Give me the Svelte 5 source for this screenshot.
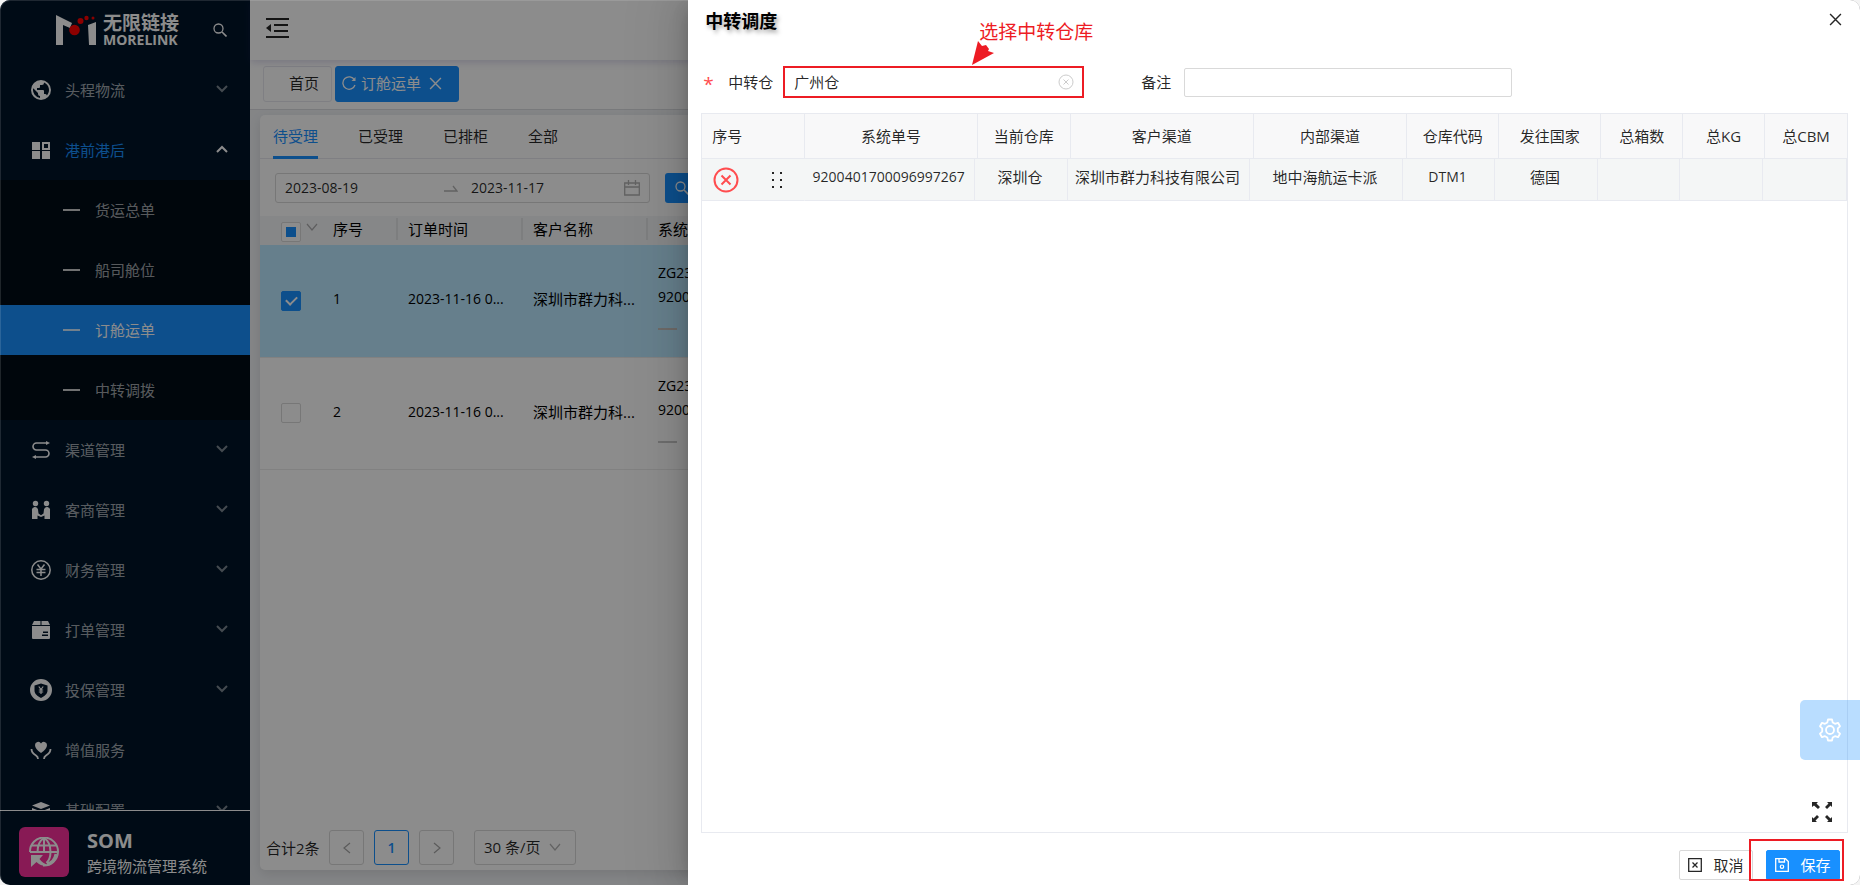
<script>
  let warehouse = $state("广州仓");
  let remark = $state("");
  let startDate = $state("2023-08-19");
  let endDate = $state("2023-11-17");
  let allChecked = $state(false);

  const menu = [
    { icon: "globe", label: "头程物流", arrow: true },
    {
      icon: "grid",
      label: "港前港后",
      arrow: true,
      open: true,
      children: ["货运总单", "船司舱位", "订舱运单", "中转调拨"],
    },
    { icon: "route", label: "渠道管理", arrow: true },
    { icon: "people", label: "客商管理", arrow: true },
    { icon: "yen", label: "财务管理", arrow: true },
    { icon: "box", label: "打单管理", arrow: true },
    { icon: "shield", label: "投保管理", arrow: true },
    { icon: "heart", label: "增值服务", arrow: false },
    { icon: "layers", label: "基础配置", arrow: true },
  ];
  const activeChild = "订舱运单";

  const statusTabs = ["待受理", "已受理", "已排柜", "全部"];

  let orders = $state([
    { id: 1, time: "2023-11-16 0...", customer: "深圳市群力科...", no: "ZG23111600001", sys: "9200401700096997267", checked: true },
    { id: 2, time: "2023-11-16 0...", customer: "深圳市群力科...", no: "ZG23111600002", sys: "9200401700096997268", checked: false },
  ]);

  const headCols = [
    { title: "序号", width: 103 },
    { title: "系统单号", width: 173 },
    { title: "当前仓库", width: 93 },
    { title: "客户渠道", width: 183 },
    { title: "内部渠道", width: 154 },
    { title: "仓库代码", width: 92 },
    { title: "发往国家", width: 102 },
    { title: "总箱数", width: 82 },
    { title: "总KG", width: 82 },
    { title: "总CBM", width: 82 },
  ];
  const bodyWidths = [103, 170, 93, 182, 153, 92, 103, 82, 83, 84];
  const transfers = [
    ["9200401700096997267", "深圳仓", "深圳市群力科技有限公司", "地中海航运卡派", "DTM1", "德国", "", "", ""],
  ];
  const isLatin = (s) => /^[\x20-\x7e]+$/.test(s);
  const share = (w, all) => (w / all.reduce((a, b) => a + b, 0)) * 100;
  const headWidths = headCols.map((c) => c.width);
</script>

{#snippet menuIcon(name)}
  <svg class="menu-icon" viewBox="0 0 22 22" width="22" height="22" aria-hidden="true">
    {#if name === "globe"}
      <path fill="currentColor" fill-rule="evenodd" d="M11 1a10 10 0 1 0 0 20 10 10 0 0 0 0-20zM10 18.900A8 8 0 0 1 3.200 9.200L8 14v1a2 2 0 0 0 2 2v1.900zm6.900-2.500A2 2 0 0 0 15 15h-1v-3a1 1 0 0 0-1-1H7V9h2a1 1 0 0 0 1-1V6h2a2 2 0 0 0 2-2v-.400a8 8 0 0 1 2.900 12.800z" />
    {:else if name === "grid"}
      <path fill="currentColor" d="M2 3h8v8H2zM2 12h8v8H2zM12 12h8v8h-8z" />
      <rect x="13" y="4" width="6" height="6" fill="none" stroke="currentColor" stroke-width="2" />
    {:else if name === "route"}
      <g fill="none" stroke="currentColor" stroke-width="1.600">
        <path d="M17 4H6.500a3.500 3.500 0 0 0 0 7h9a3.500 3.500 0 0 1 0 7H5" />
      </g>
      <path fill="currentColor" d="M16 2l4 2-4 2zM6 16l-4 2 4 2z" />
    {:else if name === "people"}
      <g fill="currentColor">
        <circle cx="5.500" cy="4.500" r="2.700" />
        <circle cx="16.500" cy="4.500" r="2.700" />
        <path d="M2 20v-8.500a3 3 0 0 1 6-1l.500 4 2.500 1.700 2.500-1.700.500-4a3 3 0 0 1 6 1V20h-5.500v-3.500L11 18l-3.500-1.500V20z" />
      </g>
    {:else if name === "yen"}
      <g fill="none" stroke="currentColor" stroke-width="1.500">
        <circle cx="11" cy="11" r="9.200" />
        <path d="M7.500 5.500l3.500 4.500 3.500-4.500M11 10v7M6.500 10.500h9M6.500 13.500h9" />
      </g>
    {:else if name === "box"}
      <path fill="currentColor" fill-rule="evenodd" d="M4 2h6.500v4H2zM11.500 2H18l2 4h-8.500zM2 7h18v12a1 1 0 0 1-1 1H3a1 1 0 0 1-1-1zM13 12.500V14h5v-1.500zM12 15.500V17h6v-1.500z" />
    {:else if name === "shield"}
      <path fill="currentColor" fill-rule="evenodd" d="M11 0a11 11 0 1 0 0 22 11 11 0 0 0 0-22zM11 4.500l6.500 2v5c0 3.500-3 5.500-6.500 7.500-3.500-2-6.500-4-6.500-7.500v-5z" />
      <path fill="none" stroke="currentColor" stroke-width="1.200" d="M8.800 7.500L11 10.500l2.200-3M11 10.500V15M8.800 11h4.400M8.800 13h4.400" />
    {:else if name === "heart"}
      <path fill="currentColor" d="M11 14C7 11 5 9 5 6a3.200 3.200 0 0 1 6-1.500A3.200 3.200 0 0 1 17 6c0 3-2 5-6 8z" />
      <path fill="none" stroke="currentColor" stroke-width="1.800" d="M1.500 10c0 4 2 5 4.500 6.500 1.500 1 2 2 2 3.500M20.500 10c0 4-2 5-4.500 6.500-1.500 1-2 2-2 3.500" />
    {:else}
      <path fill="currentColor" d="M11 3l9 3.500-9 3.500-9-3.500zM2 9l9 3.500L20 9v2l-9 3.500L2 11zM2 14l9 3.500 9-3.500v2l-9 3.500L2 16z" />
    {/if}
  </svg>
{/snippet}

{#snippet cross(size)}
  <svg viewBox="0 0 12 12" width={size} height={size} aria-hidden="true">
    <path d="M1 1l10 10M11 1L1 11" fill="none" stroke="currentColor" stroke-width="1.300" />
  </svg>
{/snippet}

<div class="window">
  <aside class="sidebar">
    <div class="logo">
      <svg viewBox="0 0 40 32" width="40" height="32" aria-hidden="true">
        <path fill="#fff" d="M0 1l16 8-2 5-7-3v20H0zM32 11l8-3v23h-7z" />
        <g fill="#f00">
          <circle cx="18.500" cy="16" r="5.300" />
          <circle cx="24.500" cy="7" r="3" />
          <circle cx="30.500" cy="4" r="2.200" />
          <circle cx="37" cy="4" r="1.500" />
        </g>
      </svg>
      <div class="logo-text">
        <span class="logo-cn">无限链接</span>
        <span class="logo-en">MORELINK</span>
      </div>
      <button class="logo-search" aria-label="搜索">
        <svg viewBox="0 0 14 14" width="14" height="14" aria-hidden="true">
          <path d="M9 9l4.500 4.500" stroke="currentColor" stroke-width="1.600" />
          <circle cx="5.500" cy="5.500" r="4.500" fill="none" stroke="currentColor" stroke-width="1.300" />
        </svg>
      </button>
    </div>

    <nav class="menu">
      {#each menu as item}
        <a href="#menu" class="menu-item" class:open={item.open}>
          {@render menuIcon(item.icon)}
          <span class="menu-label">{item.label}</span>
          {#if item.arrow}
            <svg class="chevron" viewBox="0 0 12 8" width="12" height="8" aria-hidden="true">
              <path d={item.open ? "M1 7l5-5 5 5" : "M1 1l5 5 5-5"} fill="none" stroke="currentColor" stroke-width="2" />
            </svg>
          {/if}
        </a>
        {#if item.children}
          <div class="submenu">
            {#each item.children as child}
              <a href="#menu" class="submenu-item" class:active={child === activeChild}>
                <span class="dash"></span>{child}
              </a>
            {/each}
          </div>
        {/if}
      {/each}
    </nav>

    <div class="system">
      <div class="system-logo">
        <svg viewBox="0 0 30 30" width="30" height="30" aria-hidden="true">
          <g fill="none" stroke="#fff" stroke-width="2">
            <path d="M1 15a14 14 0 1 1 13 13.500" />
            <path d="M1 15h27M3 8.500h24M15 1v14M15 1c-5 3-6.500 8-6.500 14M15 1c5 3 6.500 8 6.500 14c0 5-1 8-4 11" />
            <path d="M27 17c-1 5-4 9-9 10" stroke-width="3" />
          </g>
          <path fill="#fff" d="M2 18h12l-3.500 4c2 3 5 5 9 6-4 1.500-9 .500-12-3L2 30z" />
        </svg>
      </div>
      <div class="system-text">
        <strong>SOM</strong>
        <span>跨境物流管理系统</span>
      </div>
    </div>
  </aside>

  <main class="main">
    <header class="topbar">
      <button class="fold" aria-label="收起菜单">
        <svg viewBox="0 0 24 22" width="24" height="22" aria-hidden="true">
          <path d="M0 2h23M8 8h14M8 14h14M0 20h23" stroke="currentColor" stroke-width="2" />
          <path d="M5 7v8l-5-4z" fill="currentColor" />
        </svg>
      </button>
    </header>

    <div class="page-tabs">
      <button class="page-tab home">首页</button>
      <button class="page-tab current">
        <svg viewBox="0 0 14 14" width="14" height="14" aria-hidden="true">
          <path d="M12.500 4A6.200 6.200 0 1 0 13 9" fill="none" stroke="currentColor" stroke-width="1.300" />
          <path d="M13.500 1v4h-4z" fill="currentColor" />
        </svg>
        <span>订舱运单</span>
        {@render cross(13)}
      </button>
    </div>

    <section class="card">
      <div class="status-tabs">
        {#each statusTabs as tab, i}
          <button class="status-tab" class:active={i === 0}>{tab}</button>
        {/each}
      </div>

      <div class="search-row">
        <div class="range">
          <input class="date" aria-label="开始日期" bind:value={startDate} />
          <svg class="range-arrow" viewBox="0 0 14 8" width="14" height="8" aria-hidden="true">
            <path d="M0 7h13L9 2" fill="none" stroke="currentColor" stroke-width="1.300" />
          </svg>
          <input class="date end" aria-label="结束日期" bind:value={endDate} />
          <svg class="calendar" viewBox="0 0 16 16" width="16" height="16" aria-hidden="true">
            <path d="M.7 3h14.600v12H.7zM.7 7h14.600M4.500 0v5M11.500 0v5" fill="none" stroke="currentColor" stroke-width="1.300" />
          </svg>
        </div>
        <button class="search-btn">
          <svg viewBox="0 0 14 14" width="14" height="14" aria-hidden="true">
            <path d="M9 9l4.500 4.500" stroke="currentColor" stroke-width="1.600" />
            <circle cx="5.500" cy="5.500" r="4.500" fill="none" stroke="currentColor" stroke-width="1.300" />
          </svg>
          查询
        </button>
      </div>

      <table class="orders">
        <colgroup>
          <col class="c-check" /><col class="c-seq" /><col class="c-mid" /><col class="c-mid" /><col />
        </colgroup>
        <thead>
          <tr>
            <th class="check-cell">
              <input type="checkbox" class="check partial" aria-label="全选" bind:checked={allChecked} />
              <svg class="head-caret" viewBox="0 0 12 8" width="12" height="8" aria-hidden="true">
                <path d="M1 1l5 6 5-6" fill="none" stroke="currentColor" stroke-width="1.200" />
              </svg>
            </th>
            <th><span class="split">序号</span></th>
            <th><span class="split">订单时间</span></th>
            <th><span class="split">客户名称</span></th>
            <th>系统单号</th>
          </tr>
        </thead>
        <tbody>
          {#each orders as order}
            <tr class:selected={order.checked}>
              <td class="check-cell">
                <input type="checkbox" class="check" aria-label="选择 {order.id}" bind:checked={order.checked} />
              </td>
              <td class="latin">{order.id}</td>
              <td class="latin">{order.time}</td>
              <td>{order.customer}</td>
              <td class="latin codes">
                <div>{order.no}</div>
                <div>{order.sys}</div>
                <i class="code-dash"></i>
              </td>
            </tr>
          {/each}
        </tbody>
      </table>

      <div class="pager">
        <span class="total">合计2条</span>
        <button class="page-btn" aria-label="上一页">
          <svg viewBox="0 0 8 12" width="8" height="12" aria-hidden="true"><path d="M7 1L1 6l6 5" fill="none" stroke="currentColor" stroke-width="1.200" /></svg>
        </button>
        <button class="page-btn current">1</button>
        <button class="page-btn" aria-label="下一页">
          <svg viewBox="0 0 8 12" width="8" height="12" aria-hidden="true"><path d="M1 1l6 5-6 5" fill="none" stroke="currentColor" stroke-width="1.200" /></svg>
        </button>
        <div class="size">
          <select aria-label="每页条数">
            <option>30 条/页</option>
            <option>50 条/页</option>
          </select>
          <svg viewBox="0 0 12 8" width="12" height="8" aria-hidden="true"><path d="M1 1l5 6 5-6" fill="none" stroke="currentColor" stroke-width="1.200" /></svg>
        </div>
      </div>
    </section>
  </main>

  <div class="mask"></div>

  <div class="drawer" role="dialog" aria-labelledby="drawer-title">
    <header class="drawer-head">
      <h2 id="drawer-title">中转调度</h2>
      <button class="drawer-close" aria-label="关闭">{@render cross(13)}</button>
    </header>

    <form class="drawer-form" onsubmit={(e) => e.preventDefault()}>
      <label for="warehouse"><span class="star">*</span>中转仓</label>
      <div class="field marked">
        <input id="warehouse" bind:value={warehouse} />
        <button type="button" class="clear" aria-label="清空" onclick={() => (warehouse = "")}>
          <svg viewBox="0 0 16 16" width="16" height="16" aria-hidden="true">
            <circle cx="8" cy="8" r="7" fill="none" stroke="currentColor" />
            <path d="M5.500 5.500l5 5M10.500 5.500l-5 5" stroke="currentColor" />
          </svg>
        </button>
        <div class="tip">
          <span>选择中转仓库</span>
          <svg viewBox="0 0 22 24" width="22" height="24" aria-hidden="true">
            <path fill="#ed1c24" d="M0 24L6 0l4 5 4-1 3 4-1 2 6 2z" />
          </svg>
        </div>
      </div>
      <label for="remark" class="remark-label">备注</label>
      <input id="remark" class="remark" bind:value={remark} />
    </form>

    <div class="transfer">
      <table class="transfer-head">
        <colgroup>
          {#each headWidths as w}<col style="width: {share(w, headWidths)}%" />{/each}
        </colgroup>
        <thead>
          <tr>
            {#each headCols as col}<th>{col.title}</th>{/each}
          </tr>
        </thead>
      </table>
      <table class="transfer-body">
        <colgroup>
          {#each bodyWidths as w}<col style="width: {share(w, bodyWidths)}%" />{/each}
        </colgroup>
        <tbody>
          {#each transfers as row}
            <tr>
              <td class="ops">
                <div class="ops-row">
                  <button class="remove" aria-label="移除">
                    <svg viewBox="0 0 26 26" width="26" height="26" aria-hidden="true">
                      <circle cx="13" cy="13" r="11.500" fill="none" stroke="currentColor" stroke-width="2" />
                      <path d="M8.500 8.500l9 9M17.500 8.500l-9 9" stroke="currentColor" stroke-width="2" />
                    </svg>
                  </button>
                  <svg class="drag" viewBox="0 0 12 16" width="12" height="16" aria-hidden="true">
                    <path fill="currentColor" d="M1 0h2v2H1zM9 0h2v2H9zM1 7h2v2H1zM9 7h2v2H9zM1 14h2v2H1zM9 14h2v2H9z" />
                  </svg>
                </div>
              </td>
              {#each row as cell}<td class:latin={isLatin(cell)}>{cell}</td>{/each}
            </tr>
          {/each}
        </tbody>
      </table>
      <button class="expand" aria-label="全屏">
        <svg viewBox="0 0 20 20" width="20" height="20" aria-hidden="true">
          <path fill="currentColor" d="M0 0h6L4.500 1.500l3.500 3.500-2 2L2 3.500 0 5zM20 0v5l-1.500-1.500L15 7l-2-2 3.500-3.500L15 0zM0 20v-5l1.500 1.500L5 13l2 2-3.500 3.500L5 20zM20 20h-5l1.500-1.500L13 15l2-2 3.500 3.500L20 15z" />
        </svg>
      </button>
    </div>

    <footer class="drawer-foot">
      <button class="btn">
        <svg viewBox="0 0 14 14" width="14" height="14" aria-hidden="true">
          <path d="M.7.7h12.600v12.600H.7zM4.500 4.500l5 5M9.500 4.500l-5 5" fill="none" stroke="currentColor" stroke-width="1.300" />
        </svg>
        取消
      </button>
      <div class="save-wrap">
        <button class="btn primary">
          <svg viewBox="0 0 14 14" width="14" height="14" aria-hidden="true">
            <path d="M.7.7h9.800l2.800 2.800v9.800H.7zM4 .7V4h5.500V.7" fill="none" stroke="currentColor" stroke-width="1.300" />
            <circle cx="7" cy="8.700" r="1.700" fill="none" stroke="currentColor" stroke-width="1.200" />
          </svg>
          保存
        </button>
      </div>
    </footer>
  </div>

  <button class="settings" aria-label="设置">
    <svg viewBox="0 0 24 24" width="24" height="24" aria-hidden="true">
      <path fill="none" stroke="#fff" stroke-width="1.800" stroke-linejoin="round" d="M10 1.500h4l.700 3 2.300 1.300 3-1 2 3.500-2.200 2.100v3.200l2.200 2.100-2 3.500-3-1-2.300 1.300-.700 3h-4l-.700-3L7 18.200l-3 1-2-3.500 2.200-2.100v-3.200L2 8.300l2-3.500 3 1 2.300-1.300z" />
      <circle cx="12" cy="12" r="4" fill="none" stroke="#fff" stroke-width="1.800" />
    </svg>
  </button>
</div>

<style>
  :global(body) {
    margin: 0;
    background: #f4f4f4;
  }

  .window {
    --primary: #1890ff;
    --border: #d9d9d9;
    --red: #ed1c24;
    position: relative;
    display: flex;
    height: 100vh;
    overflow: hidden;
    border-radius: 10px;
    font-family: "Open Sans", "Noto Sans CJK SC", sans-serif;
    font-size: 15px;
    line-height: 22px;
    color: rgba(0, 0, 0, 0.85);
    background: #f0f2f5;
  }

  /* thin light edge of the window */
  .window::after {
    content: "";
    position: absolute;
    inset: 0;
    border: solid rgba(255, 255, 255, 0.12);
    border-width: 1px 0 0 1px;
    border-radius: 10px;
    pointer-events: none;
    z-index: 5;
  }

  button,
  input,
  select {
    margin: 0;
    padding: 0;
    border: 0;
    background: none;
    font: inherit;
    color: inherit;
    outline: none;
    box-sizing: border-box;
  }

  button {
    display: inline-flex;
    align-items: center;
    justify-content: center;
    cursor: pointer;
    white-space: nowrap;
  }

  a {
    color: inherit;
    text-decoration: none;
  }

  svg {
    display: block;
    flex: none;
  }

  .latin {
    font-size: 14px;
  }

  /* sidebar */
  .sidebar {
    display: flex;
    flex-direction: column;
    width: 250px;
    flex: none;
    background: #001529;
    color: #fff;
  }

  .logo {
    display: flex;
    align-items: center;
    height: 60px;
    flex: none;
    padding: 0 23px 0 56px;
  }

  .logo-text {
    display: flex;
    flex-direction: column;
    margin-left: 7px;
    font-weight: 700;
  }

  .logo-cn {
    font-size: 19px;
    line-height: 20px;
  }

  .logo-en {
    font-size: 14px;
    line-height: 14px;
  }

  .logo-search {
    margin-left: auto;
  }

  .menu {
    flex: 1;
    min-height: 0;
    overflow: hidden;
  }

  .menu-item {
    display: flex;
    align-items: center;
    height: 60px;
    padding: 0 22px 0 30px;
    color: rgba(255, 255, 255, 0.65);
  }

  .menu-icon {
    color: #fff;
  }

  .menu-label {
    margin-left: 13px;
  }

  .menu-item.open .menu-label {
    color: var(--primary);
  }

  .chevron {
    margin: 0 0 2px auto;
    opacity: 0.75;
  }

  .menu-item.open .chevron {
    color: #fff;
    opacity: 1;
  }

  .submenu {
    background: #000c17;
    display: flow-root;
  }

  .submenu-item {
    display: flex;
    align-items: center;
    height: 50px;
    margin: 5px 0 10px;
    padding-left: 63px;
    color: rgba(255, 255, 255, 0.65);
  }

  .submenu-item:last-child {
    margin-bottom: 5px;
  }

  .submenu-item.active {
    background: var(--primary);
    color: #fff;
  }

  .dash {
    width: 17px;
    height: 2px;
    margin-right: 15px;
    background: #fff;
    opacity: 0.8;
  }

  .system {
    display: flex;
    align-items: center;
    height: 74px;
    flex: none;
    border-top: 1px solid #fff;
    padding: 0 19px;
    box-sizing: content-box;
  }

  .system-logo {
    display: flex;
    align-items: center;
    justify-content: center;
    width: 50px;
    height: 50px;
    margin-top: 8px;
    border-radius: 6px;
    background: #f7309b;
  }

  .system-text {
    display: flex;
    flex-direction: column;
    margin: 8px 0 0 18px;
    line-height: 24px;
  }

  .system-text strong {
    font-size: 20px;
    line-height: 27px;
  }

  /* main area */
  .main {
    display: flex;
    flex-direction: column;
    flex: 1;
    min-width: 0;
  }

  .topbar {
    display: flex;
    align-items: center;
    height: 60px;
    flex: none;
    padding: 0 16px;
    background: #fff;
    box-sizing: border-box;
    box-shadow: 0 2px 8px rgba(60, 50, 140, 0.2);
    z-index: 1;
  }

  .fold {
    margin-top: -5px;
  }

  .page-tabs {
    display: flex;
    gap: 3px;
    padding: 6px 13px 7px;
    background: #fff;
    border-bottom: 1px solid #dcdde2;
  }

  .page-tab {
    height: 36px;
    padding-bottom: 2px;
    border: 1px solid #e8e8ee;
    border-radius: 3px;
    color: rgba(0, 0, 0, 0.85);
  }

  .page-tab.home {
    padding-left: 25px;
    padding-right: 12px;
  }

  .page-tab.current {
    gap: 5px;
    padding-left: 6px;
    padding-right: 16px;
    border-color: var(--primary);
    background: var(--primary);
    color: #fff;
  }

  .page-tab.current span {
    margin-right: 3px;
  }

  .card {
    display: flex;
    flex-direction: column;
    flex: 1;
    min-height: 0;
    margin: 5px 10px 15px;
    border-radius: 5px;
    background: #fff;
    box-shadow: 0 4px 12px rgba(0, 0, 0, 0.1);
  }

  .status-tabs {
    display: flex;
    gap: 40px;
    height: 43px;
    padding: 0 13px;
    border-bottom: 1px solid #e8e8ee;
  }

  .status-tab {
    height: 44px;
    border-bottom: 3px solid transparent;
  }

  .status-tab.active {
    color: var(--primary);
    border-color: var(--primary);
  }

  .search-row {
    display: flex;
    gap: 15px;
    padding: 14px 15px 13px;
  }

  .range {
    display: flex;
    align-items: center;
    width: 375px;
    height: 30px;
    padding: 0 9px;
    border: 1px solid var(--border);
    border-radius: 3px;
    box-sizing: border-box;
  }

  .date {
    flex: 1;
    min-width: 0;
    font-size: 14px;
  }

  .date.end {
    flex: 0 0 153px;
  }

  .range-arrow,
  .calendar {
    color: rgba(0, 0, 0, 0.3);
  }

  .range-arrow {
    margin-right: 13px;
  }

  .search-btn {
    gap: 8px;
    height: 30px;
    padding: 0 12px 0 10px;
    border-radius: 3px;
    background: var(--primary);
    color: #fff;
  }

  .orders {
    width: 100%;
    table-layout: fixed;
    border-collapse: collapse;
    color: #000;
  }

  .c-check {
    width: 63px;
  }

  .c-seq {
    width: 75px;
  }

  .c-mid {
    width: 125px;
  }

  .orders th,
  .orders td {
    box-sizing: border-box;
    padding: 0 0 3px 10px;
    white-space: nowrap;
  }

  .orders th {
    height: 29px;
    font-weight: 400;
    text-align: left;
    background: #f5f6f8;
  }

  .orders .check-cell {
    padding-left: 21px;
    vertical-align: middle;
  }

  .orders th.check-cell {
    padding-bottom: 0;
  }

  .split {
    display: block;
    border-right: 2px solid #e4e5e8;
  }

  .check {
    appearance: none;
    display: inline-block;
    width: 20px;
    height: 20px;
    border: 1px solid var(--border);
    border-radius: 2px;
    background: #fff;
    vertical-align: middle;
  }

  .check:checked {
    border-color: var(--primary);
    background: var(--primary);
  }

  .check:checked::after {
    content: "";
    display: block;
    width: 5px;
    height: 9px;
    margin: 2px 0 0 6px;
    border: solid #fff;
    border-width: 0 2px 2px 0;
    transform: rotate(45deg);
  }

  .check.partial::after {
    content: "";
    display: block;
    width: 10px;
    height: 10px;
    margin: 4px;
    background: var(--primary);
  }

  .head-caret {
    display: inline-block;
    margin: 0 0 9px 1px;
    color: rgba(0, 0, 0, 0.3);
    vertical-align: middle;
  }

  .orders td {
    height: 112px;
    border-bottom: 1px solid #ebebeb;
  }

  .orders td.codes {
    padding-bottom: 0;
  }

  .orders tr.selected {
    background: #bae7ff;
  }

  .codes div {
    line-height: 24px;
  }

  .code-dash {
    display: block;
    width: 19px;
    height: 2px;
    margin: 19px 0 10px;
    background: #c8c8c8;
  }

  .selected .code-dash {
    background: #c9c2bd;
  }

  .pager {
    display: flex;
    align-items: center;
    gap: 10px;
    margin-top: auto;
    padding: 0 6px 5px;
  }

  .total {
    width: 53px;
    white-space: nowrap;
  }

  .page-btn {
    width: 35px;
    height: 35px;
    border: 1px solid var(--border);
    border-radius: 3px;
    color: rgba(0, 0, 0, 0.35);
  }

  .page-btn.current {
    border-color: var(--primary);
    color: var(--primary);
    font-size: 14px;
    font-weight: 600;
  }

  .size {
    position: relative;
    margin-left: 10px;
  }

  .size select {
    appearance: none;
    display: block;
    width: 102px;
    height: 35px;
    padding: 0 9px 2px;
    border: 1px solid var(--border);
    border-radius: 3px;
  }

  .size svg {
    position: absolute;
    top: 13px;
    right: 15px;
    color: rgba(0, 0, 0, 0.3);
    pointer-events: none;
  }

  /* drawer */
  .mask {
    position: absolute;
    inset: 0;
    background: rgba(0, 0, 0, 0.45);
    z-index: 2;
  }

  .drawer {
    position: absolute;
    top: 0;
    right: 0;
    bottom: 0;
    display: flex;
    flex-direction: column;
    width: 63%;
    background: #fff;
    box-shadow:
      -6px 0 16px -8px rgba(0, 0, 0, 0.2),
      -9px 0 28px rgba(0, 0, 0, 0.1),
      -12px 0 48px 16px rgba(0, 0, 0, 0.05);
    z-index: 3;
  }

  .drawer-head {
    display: flex;
    align-items: center;
    justify-content: space-between;
    height: 42px;
    flex: none;
    padding: 0 18px 0 17px;
  }

  .drawer-head h2 {
    margin: 0;
    font-size: 18px;
    font-weight: 700;
    color: #000;
    text-shadow: 2px 3px 4px rgba(0, 0, 0, 0.35);
  }

  .drawer-close {
    margin-top: -4px;
  }

  .drawer-form {
    display: flex;
    align-items: center;
    padding: 24px 15px 15px;
  }

  .drawer-form label {
    display: flex;
    align-items: center;
  }

  .star {
    width: 25px;
    height: 18px;
    font-size: 19px;
    color: #ff4d4f;
  }

  .field {
    position: relative;
    display: flex;
    align-items: center;
    width: 301px;
    height: 32px;
    margin-left: 10px;
    padding: 0 8px 0 9px;
    box-sizing: border-box;
  }

  .field input {
    flex: 1;
    min-width: 0;
  }

  .marked {
    border: 2px solid var(--red);
  }

  .clear {
    color: #ccc;
  }

  .tip {
    position: absolute;
    left: 187px;
    bottom: 31px;
    width: 130px;
    font-size: 19px;
    line-height: 24px;
    color: var(--red);
  }

  .tip span {
    display: block;
    padding-left: 7px;
    white-space: nowrap;
  }

  .tip svg {
    margin-top: -3px;
  }

  .remark-label {
    margin-left: 57px;
  }

  .remark {
    width: 328px;
    height: 29px;
    margin-left: 13px;
    padding: 0 9px;
    border: 1px solid var(--border);
    border-radius: 2px;
  }

  .transfer {
    position: relative;
    flex: 1;
    min-height: 0;
    margin: 0 12px 0 13px;
    border: 1px solid #e8eaf0;
  }

  .transfer table {
    width: 100%;
    table-layout: fixed;
    border-collapse: separate;
    border-spacing: 0;
    text-align: center;
  }

  .transfer th,
  .transfer td {
    box-sizing: border-box;
    padding: 0;
    border-right: 1px solid #e8eaf0;
    border-bottom: 1px solid #e8eaf0;
    font-weight: 400;
    white-space: nowrap;
  }

  .transfer th {
    height: 45px;
    padding-bottom: 1px;
    background: #f8f8f9;
  }

  .transfer th:first-child {
    padding-left: 10px;
    text-align: left;
  }

  .transfer th:last-child {
    border-right: 0;
  }

  .transfer td {
    height: 42px;
    padding: 0 2px 6px 0;
    background: #f4f6f6;
  }

  .transfer td.ops {
    padding: 0;
    border-right-color: transparent;
  }

  .ops-row {
    display: flex;
    align-items: center;
    gap: 32px;
    padding-left: 11px;
  }

  .remove {
    color: #ff4d4f;
  }

  .expand {
    position: absolute;
    right: 15px;
    bottom: 10px;
  }

  .drawer-foot {
    display: flex;
    align-items: center;
    justify-content: flex-end;
    gap: 13px;
    padding: 17px 20px 5px;
  }

  .btn {
    gap: 11px;
    width: 74px;
    height: 30px;
    padding-bottom: 1px;
    border: 1px solid var(--border);
    border-radius: 2px;
    background: #fff;
  }

  .btn.primary {
    border-color: var(--primary);
    background: var(--primary);
    color: #fff;
  }

  .save-wrap {
    position: relative;
    display: flex;
  }

  /* highlight round the save button */
  .save-wrap::after {
    content: "";
    position: absolute;
    inset: -11px -4px -1px -17px;
    border: 2px solid var(--red);
    pointer-events: none;
  }

  .settings {
    position: absolute;
    right: 0;
    bottom: 125px;
    width: 60px;
    height: 60px;
    border-radius: 5px 0 0 5px;
    background: rgba(24, 144, 255, 0.3);
    z-index: 4;
  }
</style>
